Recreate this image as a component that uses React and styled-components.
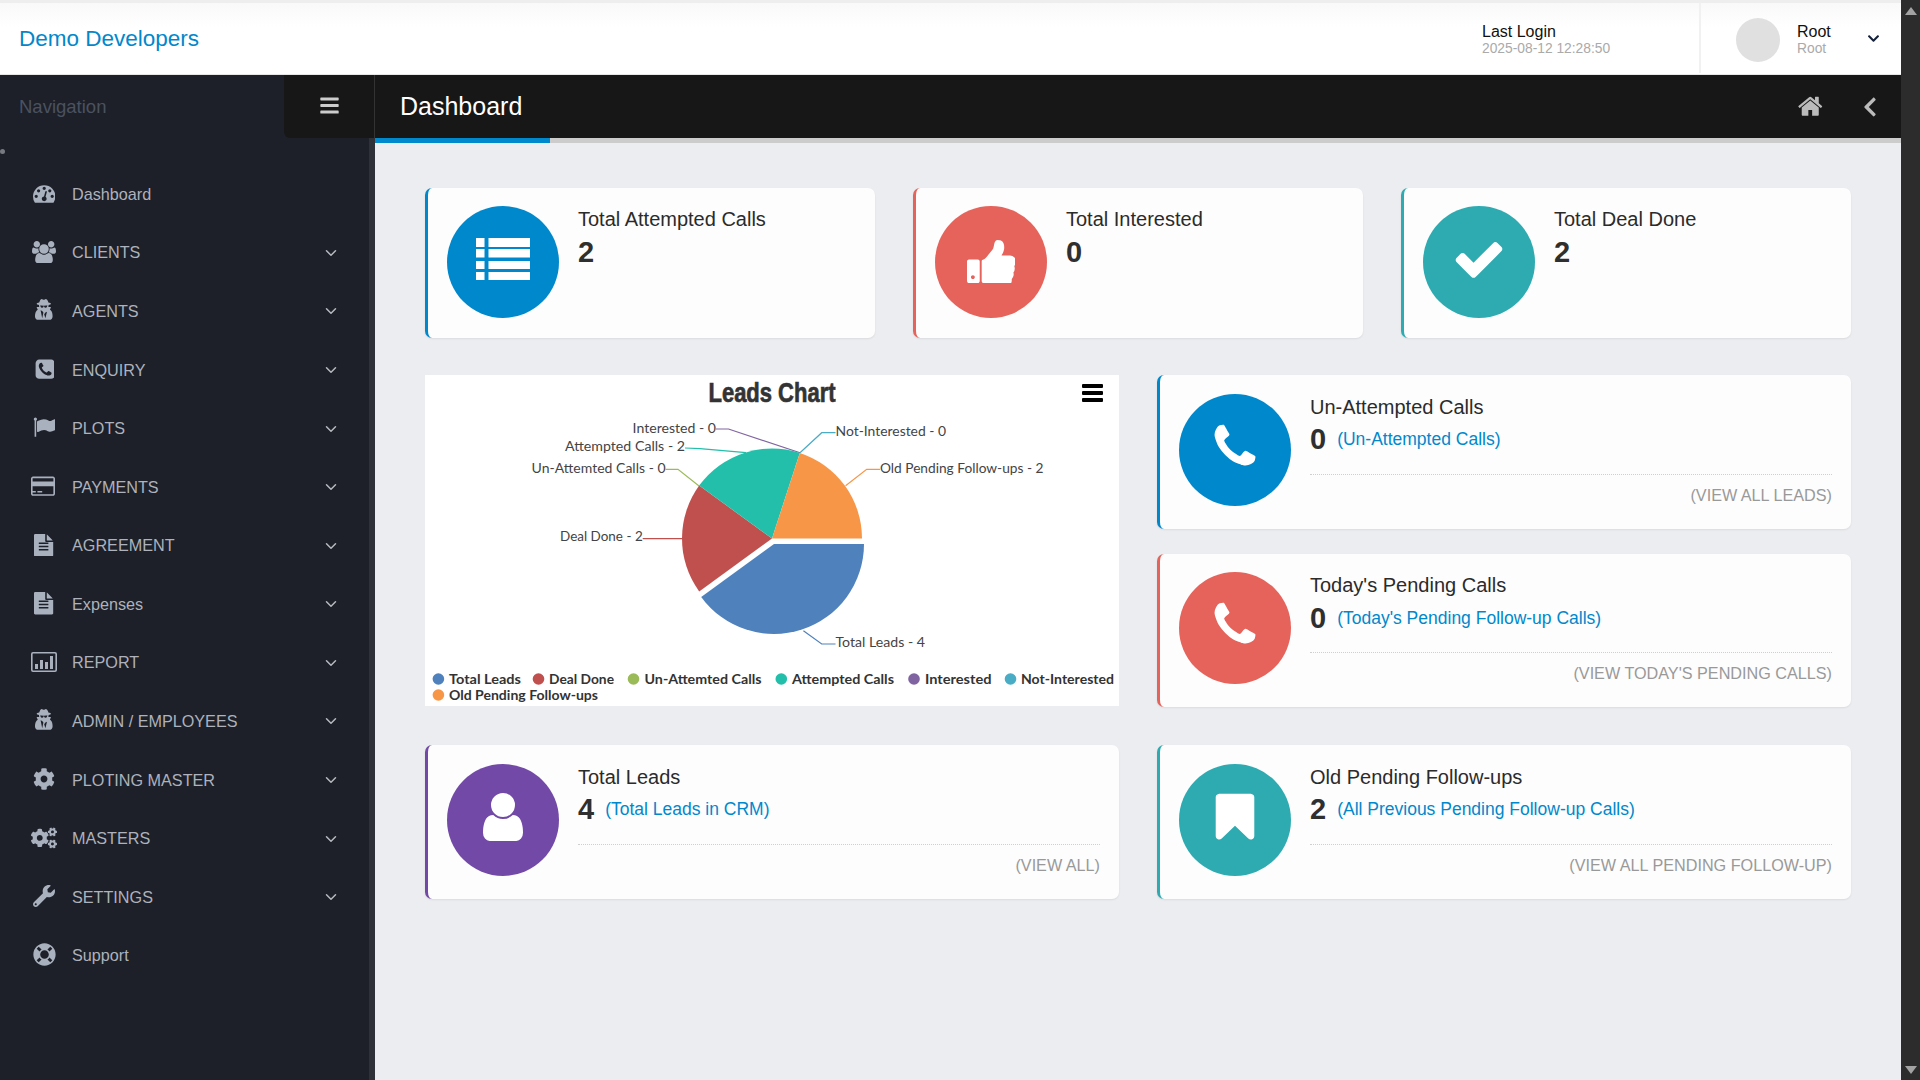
import styled, { createGlobalStyle } from "styled-components";
import { FaBars, FaChevronDown, FaChevronLeft, FaCog, FaCogs, FaLifeRing, FaWrench } from "react-icons/fa";
import { ChevronDown } from "lucide-react";

const GlobalStyle = createGlobalStyle`
  html, body {
    margin: 0;
    height: 100%;
    overflow: hidden;
    background: #ecedf1;
    font-family: "Liberation Sans", Arial, sans-serif;
  }
  * { box-sizing: border-box; }
`;

const BLUE = "#0088cc";
const RED = "#e5635b";
const TEAL = "#2dabb1";
const PURPLE = "#7249a6";

// older font-awesome glyphs, the icon package only has the redrawn ones
const GLYPHS = {
  phone: { w: 1792, h: 1792, d: "M1600 1240q0 27-10 70.5t-21 68.5q-21 50-122 106-94 51-186 51-27 0-53-3.5t-57.5-12.5-47-14.5-55.5-20.5-49-18q-98-35-175-83-127-79-264-216t-216-264q-48-77-83-175-3-9-18-49t-20.5-55.5-14.5-47-12.5-57.5-3.5-53q0-92 51-186 56-101 106-122 25-11 68.5-21t70.5-10q14 0 21 3 18 6 53 76 11 19 30 54t35 63.5 31 53.5q3 4 17.5 25t21.5 35.5 7 28.5q0 20-28.5 50t-62 55-62 53-28.5 46q0 9 5 22.5t8.5 20.5 14 24 11.5 19q76 137 174 235t235 174q2 1 19 11.5t24 14 20.5 8.5 22.5 5q18 0 46-28.5t53-62 55-62 50-28.5q14 0 28.5 7t35.5 21.5 25 17.5q25 15 53.5 31t63.5 35 54 30q70 35 76 53 3 7 3 21z" },
  users: { w: 1920, h: 1792, d: "M593 896q-162 5-265 128h-134q-82 0-138-40.5t-56-118.5q0-353 124-353 6 0 43.5 21t97.5 42.5 119 21.5q67 0 133-23-5 37-5 66 0 139 81 256zm1071 637q0 120-73 189.5t-194 69.5h-874q-121 0-194-69.5t-73-189.5q0-53 3.5-103.5t14-109 26.5-108.5 43-97.5 62-81 85.5-53.5 111.5-20q10 0 43 21.5t73 48 107 48 135 21.5 135-21.5 107-48 73-48 43-21.5q61 0 111.5 20t85.5 53.5 62 81 43 97.5 26.5 108.5 14 109 3.5 103.5zm-1024-1277q0 106-75 181t-181 75-181-75-75-181 75-181 181-75 181 75 75 181zm704 384q0 159-112.5 271.5t-271.5 112.5-271.5-112.5-112.5-271.5 112.5-271.5 271.5-112.5 271.5 112.5 112.5 271.5zm576 225q0 78-56 118.5t-138 40.5h-134q-103-123-265-128 81-117 81-256 0-29-5-66 66 23 133 23 59 0 119-21.5t97.5-42.5 43.5-21q124 0 124 353zm-128-609q0 106-75 181t-181 75-181-75-75-181 75-181 181-75 181 75 75 181z" },
  secret: { x: 81, w: 1408, h: 1792, d: "M657 1536l96-448-96-128-128-64zm256 0l128-512-128 64-96 128zm160-1010q-2-4-4-6-10-8-96-8-70 0-167 19-7 2-21 2t-21-2q-97-19-167-19-86 0-96 8-2 2-4 6 2 18 4 27 2 3 7.5 6.5t7.5 10.5q2 4 7.5 20.5t7 20.5 7.5 17 8.5 17 9 14 12 13.5 14 9.5 17.5 8 20.5 4 24.5 2q36 0 59-12.5t32.5-30 14.5-34.5 11.5-29.5 17.5-12.5h12q11 0 17.5 12.5t11.5 29.5 14.5 34.5 32.5 30 59 12.5q13 0 24.5-2t20.5-4 17.5-8 14-9.5 12-13.5 9-14 8.5-17 7.5-17 7-20.5 7.5-20.5q2-7 7.5-10.5t7.5-6.5q2-9 4-27zm416 879q0 121-73 190t-194 69h-874q-121 0-194-69t-73-190q0-61 4.5-118t19-125.5 37.5-123.5 63.5-103.5 93.5-74.5l-90-220h214q-22-64-22-128 0-12 2-32-194-40-194-96 0-57 210-99 17-62 51.5-134t70.5-114q32-37 76-37 30 0 84 31t84 31 84-31 84-31q44 0 76 36 36 42 70.5 114t51.5 134q210 42 210 99 0 56-194 96 7 81-20 160h214l-82 225q63 33 107.5 96.5t65.5 143.5 29 151.5 8 148.5z" },
  phoneSquare: { w: 1664, h: 1792, d: "M1408 1193q0-11-2-16t-18-16.5-40.5-25-47.5-26.5-45.5-25-28.5-15q-5-3-19-13t-25-15-21-5q-15 0-36.5 20.5t-39.5 45-38.5 45-33.5 20.5q-7 0-16.5-3.5t-15.5-6.5-17-9.5-14-8.5q-99-55-170-126.5t-127-170.5q-2-3-8.5-14t-9.5-17-6.5-15.5-3.5-16.5q0-13 20.5-33.5t45-38.5 45-39.5 20.5-36.5q0-10-5-21t-15-25-13-19q-3-6-15-28.5t-25-45.5-26.5-47.5-25-40.5-16.5-18-16-2q-48 0-101 22-46 21-80 94.5t-34 130.5q0 16 2.5 34t5 30.5 9 33 10 29.5 12.5 33 11 30q60 164 216.5 320.5t320.5 216.5q6 2 30 11t33 12.5 29.5 10 33 9 30.5 5 34 2.5q57 0 130.5-34t94.5-80q22-53 22-101zm256-777v960q0 119-84.5 203.5t-203.5 84.5h-960q-119 0-203.5-84.5t-84.5-203.5v-960q0-119 84.5-203.5t203.5-84.5h960q119 0 203.5 84.5t84.5 203.5z" },
  flag: { w: 1792, h: 1792, d: "M320 256q0 72-64 110v1266q0 13-9.5 22.5t-22.5 9.5h-64q-13 0-22.5-9.5t-9.5-22.5v-1266q-64-38-64-110 0-53 37.5-90.5t90.5-37.5 90.5 37.5 37.5 90.5zm1472 64v763q0 25-12.5 38.5t-39.5 27.5q-215 116-369 116-61 0-123.5-22t-108.5-48-115.5-48-142.5-22q-192 0-464 146-17 9-33 9-26 0-45-19t-19-45v-742q0-32 31-55 21-14 79-43 236-120 421-120 107 0 200 29t219 88q38 19 88 19 54 0 117.5-21t110-47 88-47 54.5-21q26 0 45 19t19 45z" },
  card: { w: 2048, h: 1792, d: "M1760 128q66 0 113 47t47 113v1216q0 66-47 113t-113 47h-1600q-66 0-113-47t-47-113v-1216q0-66 47-113t113-47h1600zm-1600 128q-13 0-22.5 9.5t-9.5 22.5v224h1664v-224q0-13-9.5-22.5t-22.5-9.5h-1600zm1600 1280q13 0 22.5-9.5t9.5-22.5v-608h-1664v608q0 13 9.5 22.5t22.5 9.5h1600zm-1632-128v-128h256v128h-256zm384 0v-128h384v128h-384z" },
  file: { w: 1536, h: 1792, d: "M1024 512v-472q22 14 36 28l408 408q14 14 28 36h-472zm-128 32q0 40 28 68t68 28h544v1056q0 40-28 68t-68 28h-1344q-40 0-68-28t-28-68v-1600q0-40 28-68t68-28h800v544zm256 744v-64q0-14-9-23t-23-9h-704q-14 0-23 9t-9 23v64q0 14 9 23t23 9h704q14 0 23-9t9-23zm0-256v-64q0-14-9-23t-23-9h-704q-14 0-23 9t-9 23v64q0 14 9 23t23 9h704q14 0 23-9t9-23zm0-256v-64q0-14-9-23t-23-9h-704q-14 0-23 9t-9 23v64q0 14 9 23t23 9h704q14 0 23-9t9-23z" },
  gauge: { w: 1792, h: 1792, d: "M384 1152q0-53-37.5-90.5t-90.5-37.5-90.5 37.5-37.5 90.5 37.5 90.5 90.5 37.5 90.5-37.5 37.5-90.5zm192-448q0-53-37.5-90.5t-90.5-37.5-90.5 37.5-37.5 90.5 37.5 90.5 90.5 37.5 90.5-37.5 37.5-90.5zm428 481l101-382q6-26-7.5-48.5t-38.5-29.5-48 6.5-30 39.5l-101 382q-60 5-107 43.5t-63 98.5q-20 77 20 146t117 89 146-20 89-117q16-60-6-117t-72-91zm660-33q0-53-37.5-90.5t-90.5-37.5-90.5 37.5-37.5 90.5 37.5 90.5 90.5 37.5 90.5-37.5 37.5-90.5zm-640-640q0-53-37.5-90.5t-90.5-37.5-90.5 37.5-37.5 90.5 37.5 90.5 90.5 37.5 90.5-37.5 37.5-90.5zm448 192q0-53-37.5-90.5t-90.5-37.5-90.5 37.5-37.5 90.5 37.5 90.5 90.5 37.5 90.5-37.5 37.5-90.5zm320 448q0 261-141 483-19 29-54 29h-1402q-35 0-54-29-141-221-141-483 0-182 71-348t191-286 286-191 348-71 348 71 286 191 191 286 71 348z" },
  thumb: { w: 1600, h: 1536, d: "M256 1344q0-26-19-45t-45-19q-27 0-45.5 19t-18.5 45q0 27 18.5 45.5t45.5 18.5q26 0 45-18.5t19-45.5zm160-512v640q0 26-19 45t-45 19h-288q-26 0-45-19t-19-45v-640q0-26 19-45t45-19h288q26 0 45 19t19 45zm1184 0q0 86-55 149 15 44 15 76 3 76-43 137 17 56 0 117-15 57-54 94 9 112-49 181-64 76-197 78h-129q-66 0-144-15.5t-121.5-29-120.5-39.5q-123-43-158-44-26-1-45-19.5t-19-44.5v-641q0-25 18-43.5t43-20.5q24-2 76-59t101-121q68-87 101-120 18-18 31-48t17.5-48.5 13.5-60.5q7-39 12.5-61t19.5-52 34-50q19-19 45-19 46 0 82.5 10.5t60 26 40 40.5 24 45 12 50 5 45 .5 39q0 38-9.5 76t-19 60-27.5 56q-3 6-10 18t-11 22-8 24h277q78 0 135 57t57 135z" },
  check: { w: 1792, h: 1792, d: "M1671 566q0 40-28 68l-724 724-136 136q-28 28-68 28t-68-28l-136-136-362-362q-28-28-28-68t28-68l136-136q28-28 68-28t68 28l294 295 656-657q28-28 68-28t68 28l136 136q28 28 28 68z" },
  home: { w: 1792, h: 1792, d: "M1472 992v480q0 26-19 45t-45 19h-384v-384h-256v384h-384q-26 0-45-19t-19-45v-480q0-1 .5-3t.5-3l575-474 575 474q1 2 1 6zm223-69l-62 74q-8 9-21 11h-3q-13 0-21-7l-692-577-692 577q-12 8-24 7-13-2-21-11l-62-74q-8-10-7-23.5t11-21.5l719-599q32-26 76-26t76 26l244 204v-195q0-14 9-23t23-9h192q14 0 23 9t9 23v408l219 182q10 8 11 21.5t-7 23.5z" },
  user: { w: 1792, h: 1792, d: "M1536 1399q0 109-62.5 187t-150.5 78h-854q-88 0-150.5-78t-62.5-187q0-85 8.5-160.5t31.5-152 58.5-131 94-89 134.5-34.5q131 128 313 128t313-128q76 0 134.5 34.5t94 89 58.5 131 31.5 152 8.5 160.5zm-256-887q0 159-112.5 271.5t-271.5 112.5-271.5-112.5-112.5-271.5 112.5-271.5 271.5-112.5 271.5 112.5 112.5 271.5z" },
  bookmark: { w: 1792, h: 1792, d: "M1420 128q23 0 44 9 33 13 52.5 41t19.5 62v1289q0 34-19.5 62t-52.5 41q-19 8-44 8-48 0-83-32l-441-424-441 424q-36 33-83 33-23 0-44-9-33-13-52.5-41t-19.5-62v-1289q0-34 19.5-62t52.5-41q21-9 44-9h1048z" },
};

function Glyph({ name, height = 22.4 }) {
  const g = GLYPHS[name];
  return (
    <svg viewBox={`${g.x || 0} 0 ${g.w} ${g.h}`} height={height} width={(height * g.w) / g.h} fill="currentColor">
      <path d={g.d} />
    </svg>
  );
}

const ThListIcon = () => (
  <svg viewBox="0 0 54 42" width="54" height="42" fill="currentColor">
    <rect x="0" y="0" width="8.5" height="9" />
    <rect x="12.5" y="0" width="41.5" height="9" />
    <rect x="0" y="11" width="8.5" height="8.5" />
    <rect x="12.5" y="11" width="41.5" height="8.5" />
    <rect x="0" y="23" width="8.5" height="8" />
    <rect x="12.5" y="23" width="41.5" height="8" />
    <rect x="0" y="34" width="8.5" height="8" />
    <rect x="12.5" y="34" width="41.5" height="8" />
  </svg>
);

const ReportIcon = () => (
  <svg viewBox="0 0 26 20" width="26" height="20" fill="currentColor">
    <path d="M2 0h22a2 2 0 0 1 2 2v16a2 2 0 0 1-2 2H2a2 2 0 0 1-2-2V2a2 2 0 0 1 2-2zm0 1.6a.4.4 0 0 0-.4.4v16c0 .2.2.4.4.4h22a.4.4 0 0 0 .4-.4V2a.4.4 0 0 0-.4-.4H2z" />
    <rect x="4" y="12" width="3" height="5" />
    <rect x="9" y="8" width="3" height="9" />
    <rect x="14" y="10" width="3" height="7" />
    <rect x="19" y="4" width="3" height="13" />
  </svg>
);

const navItems = [
  { label: "Dashboard", icon: <Glyph name="gauge" /> },
  { label: "CLIENTS", icon: <Glyph name="users" />, more: true },
  { label: "AGENTS", icon: <Glyph name="secret" />, more: true },
  { label: "ENQUIRY", icon: <Glyph name="phoneSquare" />, more: true },
  { label: "PLOTS", icon: <Glyph name="flag" />, more: true },
  { label: "PAYMENTS", icon: <Glyph name="card" />, more: true },
  { label: "AGREEMENT", icon: <Glyph name="file" />, more: true },
  { label: "Expenses", icon: <Glyph name="file" />, more: true },
  { label: "REPORT", icon: <ReportIcon />, more: true },
  { label: "ADMIN / EMPLOYEES", icon: <Glyph name="secret" />, more: true },
  { label: "PLOTING MASTER", icon: <FaCog size={22} />, more: true },
  { label: "MASTERS", icon: <FaCogs size={26} />, more: true },
  { label: "SETTINGS", icon: <FaWrench size={22} />, more: true },
  { label: "Support", icon: <FaLifeRing size={23} /> },
];

// same order and colours as the chart library draws them
const pieSlices = [
  { color: "#4f81bc", from: 0, to: 144, cx: 774, cy: 544 },
  { color: "#c0504e", from: 144, to: 216, cx: 772, cy: 538.5 },
  { color: "#23bfaa", from: 216, to: 288, cx: 772, cy: 538.5 },
  { color: "#f79647", from: 288, to: 360, cx: 772, cy: 538.5 },
];

const pieLabels = [
  { text: "Interested - 0", x: 716, y: 433, w: 83.4, end: true, color: "#8064a1", line: "716,429 728.5,429 800,452.7" },
  { text: "Not-Interested - 0", x: 835.5, y: 436, w: 110.6, color: "#4aacc5", line: "835.5,432.7 821.7,432.7 800,452.7" },
  { text: "Attempted Calls - 2", x: 685, y: 451, w: 120, end: true, color: "#23bfaa", line: "685,448 700,448.7 746,452.7" },
  { text: "Un-Attemted Calls - 0", x: 665.6, y: 473, w: 134, end: true, color: "#9bbb58", line: "665.6,469.3 678,469.3 700,486.7" },
  { text: "Old Pending Follow-ups - 2", x: 880, y: 473, w: 163.5, color: "#f79647", line: "880,469.3 866.7,469.3 845.6,485.7" },
  { text: "Deal Done - 2", x: 642.7, y: 541, w: 82.7, end: true, color: "#c0504e", line: "642.7,538.7 682.6,538.7" },
  { text: "Total Leads - 4", x: 835.5, y: 647, w: 89.5, color: "#4f81bc", line: "835.5,644 821.7,644 803.4,630.7" },
];

const legendItems = [
  { text: "Total Leads", color: "#4f81bc", dot: 438.4, x: 449, y: 684, w: 72 },
  { text: "Deal Done", color: "#c0504e", dot: 538.5, x: 549, y: 684, w: 65 },
  { text: "Un-Attemted Calls", color: "#9bbb58", dot: 633.5, x: 644.5, y: 684, w: 117 },
  { text: "Attempted Calls", color: "#23bfaa", dot: 781.3, x: 792, y: 684, w: 102 },
  { text: "Interested", color: "#8064a1", dot: 914, x: 925, y: 684, w: 66.5 },
  { text: "Not-Interested", color: "#4aacc5", dot: 1010.5, x: 1021, y: 684, w: 93 },
  { text: "Old Pending Follow-ups", color: "#f79647", dot: 438.4, x: 449, y: 700, w: 149 },
];

function slicePath({ from, to, cx, cy }) {
  const r = 90;
  const rad = (d) => (d * Math.PI) / 180;
  const x1 = cx + r * Math.cos(rad(from));
  const y1 = cy + r * Math.sin(rad(from));
  const x2 = cx + r * Math.cos(rad(to));
  const y2 = cy + r * Math.sin(rad(to));
  return `M${cx} ${cy}L${x1} ${y1}A${r} ${r} 0 0 1 ${x2} ${y2}Z`;
}

function LeadsChart() {
  return (
    <ChartCard>
      <svg viewBox="425 375 694 331" width="694" height="331">
        <ChartTitle x="772" y="402" textAnchor="middle" textLength="127" lengthAdjust="spacingAndGlyphs">
          Leads Chart
        </ChartTitle>
        <rect x="1082" y="384" width="21" height="4" rx="1" fill="#000" />
        <rect x="1082" y="391" width="21" height="4" rx="1" fill="#000" />
        <rect x="1082" y="398" width="21" height="4" rx="1" fill="#000" />
        {pieLabels.map((l) => (
          <polyline key={l.text} points={l.line} fill="none" stroke={l.color} strokeWidth="1.2" />
        ))}
        {pieSlices.map((s) => (
          <path key={s.color} d={slicePath(s)} fill={s.color} />
        ))}
        {pieLabels.map((l) => (
          <ChartLabel
            key={l.text}
            x={l.x}
            y={l.y}
            textAnchor={l.end ? "end" : "start"}
            textLength={l.w}
            lengthAdjust="spacingAndGlyphs"
          >
            {l.text}
          </ChartLabel>
        ))}
        {legendItems.map((l) => (
          <g key={l.text}>
            <circle cx={l.dot} cy={l.y - 5} r="5.8" fill={l.color} />
            <LegendText x={l.x} y={l.y} textLength={l.w} lengthAdjust="spacingAndGlyphs">
              {l.text}
            </LegendText>
          </g>
        ))}
      </svg>
    </ChartCard>
  );
}

function StatCard({ color, icon, title, value }) {
  return (
    <Card $color={color} $height={150} $top={18}>
      <Circle $color={color}>{icon}</Circle>
      <CardBody>
        <CardTitle>{title}</CardTitle>
        <ValueRow>
          <Value>{value}</Value>
        </ValueRow>
      </CardBody>
    </Card>
  );
}

function LinkCard({ color, icon, title, value, link, footer }) {
  return (
    <Card $color={color} $height={153.5} $top={18.5}>
      <Circle $color={color}>{icon}</Circle>
      <CardBody>
        <CardTitle>{title}</CardTitle>
        <ValueRow>
          <Value>{value}</Value>
          <ValueLink>{link}</ValueLink>
        </ValueRow>
        <CardFooter>{footer}</CardFooter>
      </CardBody>
    </Card>
  );
}

export default function App() {
  return (
    <>
      <GlobalStyle />
      <Shell>
        <Page>
          <Header>
            <Brand>Demo Developers</Brand>
            <LastLogin>
              <Strong>Last Login</Strong>
              <Muted>2025-08-12 12:28:50</Muted>
            </LastLogin>
            <UserBox>
              <Avatar />
              <UserText>
                <Strong>Root</Strong>
                <Muted>Root</Muted>
              </UserText>
              <UserCaret>
                <FaChevronDown />
              </UserCaret>
            </UserBox>
          </Header>
          <Body>
            <Sidebar>
              <SidebarHead>
                <NavTitle>Navigation</NavTitle>
                <Toggle>
                  <FaBars />
                </Toggle>
              </SidebarHead>
              <NavList>
                {navItems.map((item) => (
                  <NavItem key={item.label}>
                    <NavIcon>{item.icon}</NavIcon>
                    <NavLabel>{item.label}</NavLabel>
                    {item.more && (
                      <NavCaret>
                        <ChevronDown size={18} strokeWidth={2} />
                      </NavCaret>
                    )}
                  </NavItem>
                ))}
              </NavList>
            </Sidebar>
            <Main>
              <TitleBar>
                <PageTitle>Dashboard</PageTitle>
                <TitleActions>
                  <Glyph name="home" height={26.5} />
                  <FaChevronLeft size={22} />
                </TitleActions>
              </TitleBar>
              <Progress>
                <ProgressFill />
              </Progress>
              <Content>
                <TopRow>
                  <StatCard color={BLUE} icon={<ThListIcon />} title="Total Attempted Calls" value="2" />
                  <StatCard color={RED} icon={<Glyph name="thumb" height={47} />} title="Total Interested" value="0" />
                  <StatCard color={TEAL} icon={<Glyph name="check" height={54} />} title="Total Deal Done" value="2" />
                </TopRow>
                <HalfRow>
                  <LeadsChart />
                  <Stack>
                    <LinkCard
                      color={BLUE}
                      icon={<Glyph name="phone" height={52} />}
                      title="Un-Attempted Calls"
                      value="0"
                      link="(Un-Attempted Calls)"
                      footer="(VIEW ALL LEADS)"
                    />
                    <LinkCard
                      color={RED}
                      icon={<Glyph name="phone" height={52} />}
                      title="Today's Pending Calls"
                      value="0"
                      link="(Today's Pending Follow-up Calls)"
                      footer="(VIEW TODAY'S PENDING CALLS)"
                    />
                  </Stack>
                </HalfRow>
                <HalfRow>
                  <LinkCard
                    color={PURPLE}
                    icon={<Glyph name="user" height={56} />}
                    title="Total Leads"
                    value="4"
                    link="(Total Leads in CRM)"
                    footer="(VIEW ALL)"
                  />
                  <LinkCard
                    color={TEAL}
                    icon={<Glyph name="bookmark" height={54} />}
                    title="Old Pending Follow-ups"
                    value="2"
                    link="(All Previous Pending Follow-up Calls)"
                    footer="(VIEW ALL PENDING FOLLOW-UP)"
                  />
                </HalfRow>
              </Content>
            </Main>
          </Body>
        </Page>
        <Scrollbar>
          <ArrowUp />
          <ArrowDown />
        </Scrollbar>
      </Shell>
    </>
  );
}

const Shell = styled.div`
  display: flex;
  width: 100%;
  height: 1080px;
  overflow: hidden;
`;

const Page = styled.div`
  flex: 1;
  min-width: 0;
  display: flex;
  flex-direction: column;
`;

const Scrollbar = styled.div`
  width: 19px;
  flex: none;
  background: #2c2c2c;
  display: flex;
  flex-direction: column;
  justify-content: space-between;
  align-items: center;
  padding: 7px 0 6px;
`;

const ArrowUp = styled.div`
  width: 0;
  height: 0;
  border-left: 6px solid transparent;
  border-right: 6px solid transparent;
  border-bottom: 8px solid #a3a3a3;
`;

const ArrowDown = styled(ArrowUp)`
  transform: rotate(180deg);
`;

const Header = styled.header`
  height: 75px;
  flex: none;
  display: flex;
  align-items: stretch;
  border-top: 3px solid #eeeeee;
  border-bottom: 1px solid #e6e6e6;
  background: linear-gradient(#f9f9f9, #ffffff 24px);
`;

const Brand = styled.div`
  font-size: 22.5px;
  color: ${BLUE};
  padding: 22px 0 0 19px;
  line-height: 28px;
  flex: 1;
`;

const LastLogin = styled.div`
  width: 217px;
  flex: none;
  padding-top: 20px;
`;

const Strong = styled.div`
  font-size: 16px;
  line-height: 17px;
  color: #111;
`;

const Muted = styled.div`
  font-size: 13.8px;
  line-height: 16px;
  margin-top: 1px;
  color: #aaaaaa;
`;

const UserBox = styled.div`
  width: 202px;
  flex: none;
  display: flex;
  border-left: 2px solid #f1f1f1;
  margin-bottom: 1px;
  padding: 15px 0 0 35px;
`;

const Avatar = styled.div`
  width: 44px;
  height: 44px;
  border-radius: 50%;
  background: #e0e0e0;
`;

const UserText = styled.div`
  margin-left: 17px;
  padding-top: 5px;
  width: 70px;
`;

const UserCaret = styled.div`
  color: #14213a;
  font-size: 13px;
  padding-top: 14px;
  line-height: 1;
`;

const Body = styled.div`
  flex: 1;
  min-height: 0;
  display: flex;
`;

const Sidebar = styled.aside`
  width: 375px;
  flex: none;
  background: #1d2028;
  border-right: 6px solid #2e3138;
  position: relative;

  &::after {
    content: "";
    position: absolute;
    left: 0;
    top: 74px;
    width: 5px;
    height: 5px;
    border-radius: 50%;
    background: #777a80;
  }
`;

const SidebarHead = styled.div`
  height: 63px;
  display: flex;
  align-items: center;
  justify-content: space-between;
  margin-right: -6px;
`;

const NavTitle = styled.div`
  font-size: 18.5px;
  color: #4a5261;
  padding-left: 19px;
`;

const Toggle = styled.div`
  width: 91px;
  height: 63px;
  background: #171717;
  border-bottom-left-radius: 6px;
  border-right: 1px solid #333;
  color: #cccccc;
  display: flex;
  align-items: center;
  justify-content: center;
  font-size: 21px;
  padding: 0 0 3px 0;
`;

const NavList = styled.nav`
  padding-top: 27px;
`;

const NavItem = styled.div`
  height: 58.58px;
  display: flex;
  align-items: center;
  padding-left: 32px;
  padding-right: 29px;
  color: #adb2bd;
`;

const NavIcon = styled.span`
  width: 24px;
  display: flex;
  justify-content: center;
  flex: none;
  color: #a9b1bf;
  margin-right: 16px;
  margin-top: -2px;

  svg {
    flex: none;
  }
`;

const NavLabel = styled.span`
  font-size: 16.2px;
  flex: 1;
`;

const NavCaret = styled.span`
  display: flex;
  color: #b7bac0;
`;

const Main = styled.main`
  flex: 1;
  min-width: 0;
  display: flex;
  flex-direction: column;
`;

const TitleBar = styled.div`
  height: 63px;
  flex: none;
  background: #171717;
  display: flex;
  align-items: center;
  justify-content: space-between;
  padding: 0 20px 0 25px;
`;

const PageTitle = styled.h1`
  margin: 0;
  font-size: 25px;
  font-weight: 400;
  color: #ffffff;
`;

const TitleActions = styled.div`
  display: flex;
  align-items: center;
  gap: 36px;
  color: #bbbbbb;
`;

const Progress = styled.div`
  height: 5px;
  flex: none;
  background: #cccccc;
`;

const ProgressFill = styled.div`
  width: 175px;
  height: 100%;
  background: ${BLUE};
`;

const Content = styled.div`
  flex: 1;
  background: #ecedf1;
  padding: 45px 50px 0;
  display: flex;
  flex-direction: column;
`;

const TopRow = styled.div`
  display: grid;
  grid-template-columns: repeat(3, 1fr);
  gap: 38px;
  margin-bottom: 37px;
`;

const HalfRow = styled.div`
  display: grid;
  grid-template-columns: repeat(2, 1fr);
  gap: 38px;
  margin-bottom: 38px;
`;

const Stack = styled.div`
  display: flex;
  flex-direction: column;
  gap: 25px;
`;

const Card = styled.div`
  height: ${(p) => p.$height}px;
  background: #fdfdfd;
  border-left: 3px solid ${(p) => p.$color};
  border-radius: 7px;
  box-shadow: 0 1px 2px rgba(0, 0, 0, 0.08);
  padding: ${(p) => p.$top}px 19px 0 19px;
  display: flex;
  gap: 19px;
`;

const Circle = styled.div`
  width: 112px;
  height: 112px;
  flex: none;
  border-radius: 50%;
  background: ${(p) => p.$color};
  color: #ffffff;
  display: flex;
  align-items: center;
  justify-content: center;
  padding-bottom: 6px;
`;

const CardBody = styled.div`
  flex: 1;
  min-width: 0;
`;

const CardTitle = styled.div`
  font-size: 20px;
  line-height: 26px;
  color: #2b2b2b;
`;

const ValueRow = styled.div`
  display: flex;
  align-items: center;
  gap: 11px;
  height: 28px;
  margin-top: 6px;
`;

const Value = styled.span`
  font-size: 29px;
  font-weight: 700;
  color: #2f2f2f;
`;

const ValueLink = styled.span`
  font-size: 17.5px;
  color: ${BLUE};
`;

const CardFooter = styled.div`
  margin-top: 20px;
  border-top: 1px dotted #cfcfcf;
  padding-top: 9px;
  font-size: 16.2px;
  line-height: 22px;
  text-align: right;
  color: #999999;
`;

const ChartCard = styled.div`
  height: 331px;
  background: #ffffff;
  svg {
    display: block;
  }
`;

const ChartTitle = styled.text`
  font-family: "Liberation Sans", sans-serif;
  font-size: 28px;
  font-weight: 700;
  fill: #333333;
  stroke: #333333;
  stroke-width: 0.7px;
`;

const ChartLabel = styled.text`
  font-family: Lato, sans-serif;
  font-size: 13.7px;
  fill: #444444;
`;

const LegendText = styled.text`
  font-family: Lato, sans-serif;
  font-size: 14px;
  font-weight: 700;
  fill: #333333;
`;
